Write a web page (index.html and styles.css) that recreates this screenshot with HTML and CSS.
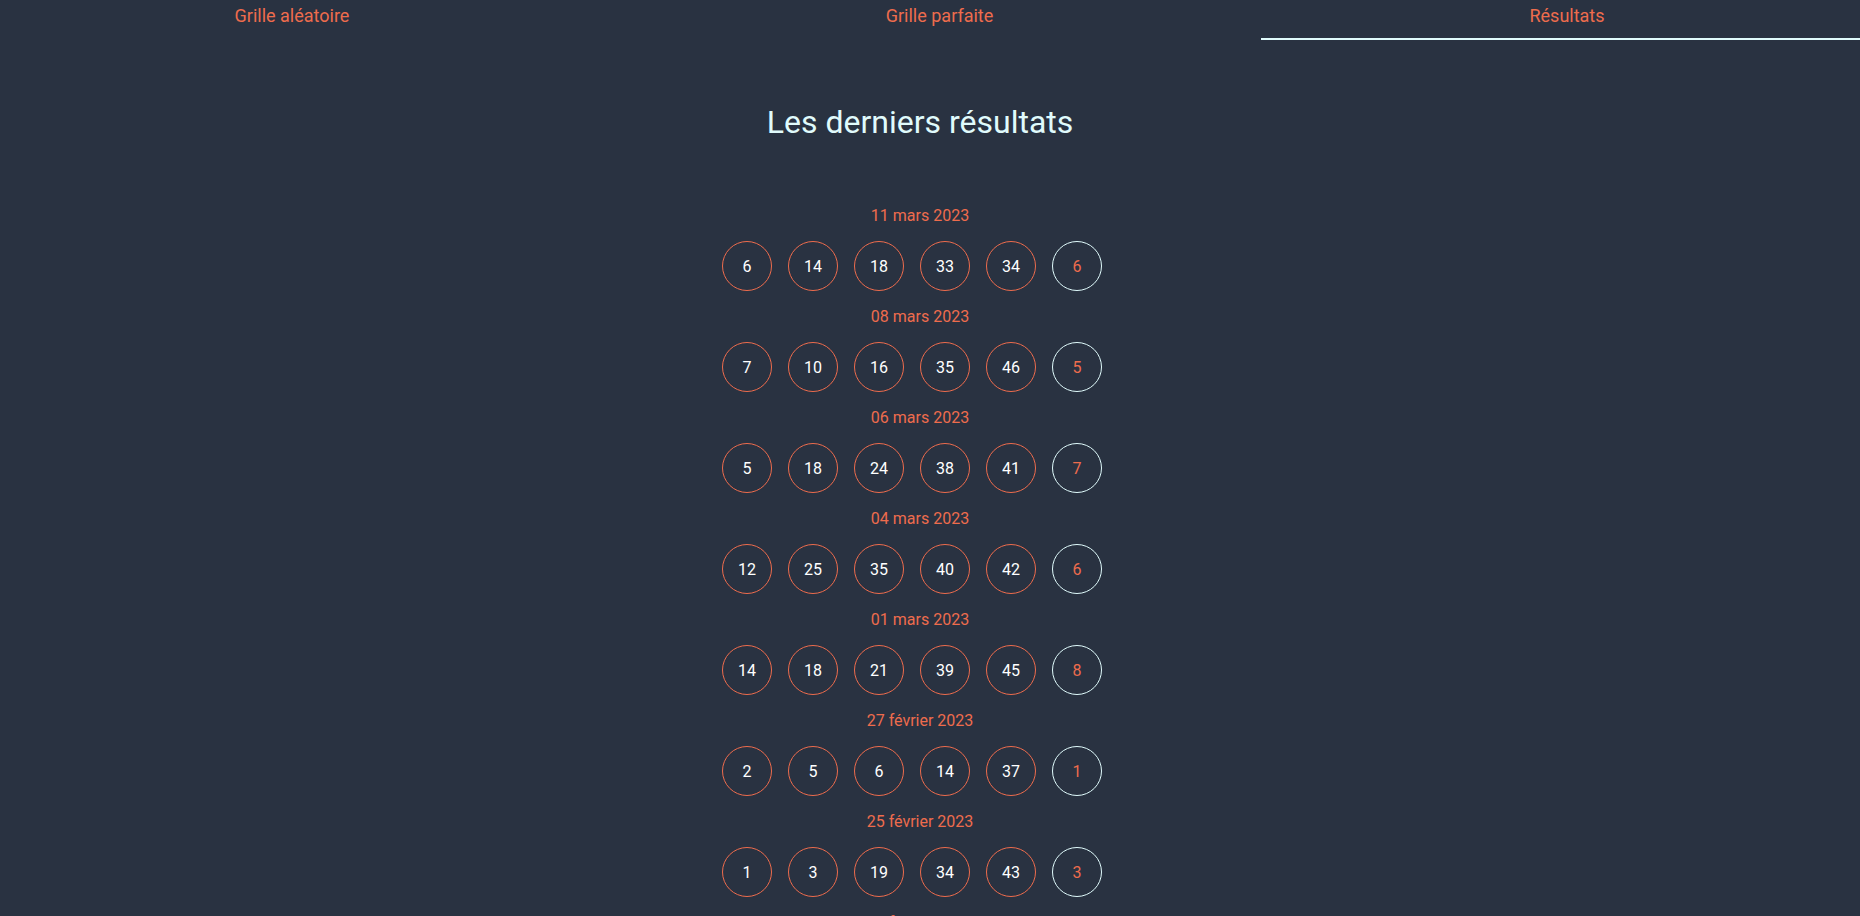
FILE: index.html
```html
<!DOCTYPE html>
<html lang="fr">
<head>
<meta charset="utf-8">
<title>Résultats</title>
<link rel="stylesheet" href="styles.css">
</head>
<body>
<nav class="tabs">
  <a class="tab tab-random">Grille aléatoire</a>
  <a class="tab tab-perfect">Grille parfaite</a>
  <a class="tab tab-results active">Résultats</a>
</nav>
<main class="main">
  <h1 class="title">Les derniers résultats</h1>
  <section class="draws">
    <div class="draw">
      <div class="date">11 mars 2023</div>
      <div class="balls"><span class="ball">6</span><span class="ball">14</span><span class="ball">18</span><span class="ball">33</span><span class="ball">34</span><span class="ball lucky">6</span></div>
    </div>
    <div class="draw">
      <div class="date">08 mars 2023</div>
      <div class="balls"><span class="ball">7</span><span class="ball">10</span><span class="ball">16</span><span class="ball">35</span><span class="ball">46</span><span class="ball lucky">5</span></div>
    </div>
    <div class="draw">
      <div class="date">06 mars 2023</div>
      <div class="balls"><span class="ball">5</span><span class="ball">18</span><span class="ball">24</span><span class="ball">38</span><span class="ball">41</span><span class="ball lucky">7</span></div>
    </div>
    <div class="draw">
      <div class="date">04 mars 2023</div>
      <div class="balls"><span class="ball">12</span><span class="ball">25</span><span class="ball">35</span><span class="ball">40</span><span class="ball">42</span><span class="ball lucky">6</span></div>
    </div>
    <div class="draw">
      <div class="date">01 mars 2023</div>
      <div class="balls"><span class="ball">14</span><span class="ball">18</span><span class="ball">21</span><span class="ball">39</span><span class="ball">45</span><span class="ball lucky">8</span></div>
    </div>
    <div class="draw">
      <div class="date">27 février 2023</div>
      <div class="balls"><span class="ball">2</span><span class="ball">5</span><span class="ball">6</span><span class="ball">14</span><span class="ball">37</span><span class="ball lucky">1</span></div>
    </div>
    <div class="draw">
      <div class="date">25 février 2023</div>
      <div class="balls"><span class="ball">1</span><span class="ball">3</span><span class="ball">19</span><span class="ball">34</span><span class="ball">43</span><span class="ball lucky">3</span></div>
    </div>
    <div class="draw">
      <div class="date">22 février 2023</div>
      <div class="balls"><span class="ball">4</span><span class="ball">11</span><span class="ball">20</span><span class="ball">27</span><span class="ball">44</span><span class="ball lucky">2</span></div>
    </div>
  </section>
</main>
</body>
</html>
```
FILE: styles.css
```css
html {
  overflow: hidden;
  background: #293241;
}
body {
  margin: 0;
  background: #293241;
  font-family: Roboto, "Liberation Sans", sans-serif;
  color: #e0fbfc;
}
.tabs {
  display: flex;
  height: 40px;
}
.tab {
  box-sizing: border-box;
  display: block;
  text-align: center;
  font-size: 18px;
  line-height: 21px;
  padding-top: 5px;
  height: 40px;
  color: #ee6c4d;
  cursor: pointer;
  border-bottom: 2px solid transparent;
}
.tab-random {
  width: 584px;
}
.tab-perfect {
  width: 677px;
  padding-left: 34px;
}
.tab-results {
  flex: 1;
  padding-left: 13px;
}
.tab.active {
  border-bottom-color: #e0fbfc;
}
.main {
  padding-right: 20px;
  display: flex;
  flex-direction: column;
  align-items: center;
}
.title {
  margin: 64px 0 0;
  font-size: 32px;
  font-weight: 400;
  line-height: 37px;
  color: #e0fbfc;
}
.draws {
  margin-top: 65px;
  display: flex;
  flex-direction: column;
  align-items: center;
}
.draw {
  display: flex;
  flex-direction: column;
  align-items: center;
}
.date {
  font-size: 16px;
  line-height: 19px;
  color: #ee6c4d;
  margin-bottom: 16px;
}
.balls {
  display: flex;
  margin-bottom: 16px;
}
.ball {
  box-sizing: border-box;
  width: 50px;
  height: 50px;
  margin-right: 16px;
  border: 1px solid #ee6c4d;
  border-radius: 50%;
  display: flex;
  align-items: center;
  justify-content: center;
  font-size: 16px;
  color: #ffffff;
}
.ball.lucky {
  border-color: #e0fbfc;
  color: #ee6c4d;
}
```
